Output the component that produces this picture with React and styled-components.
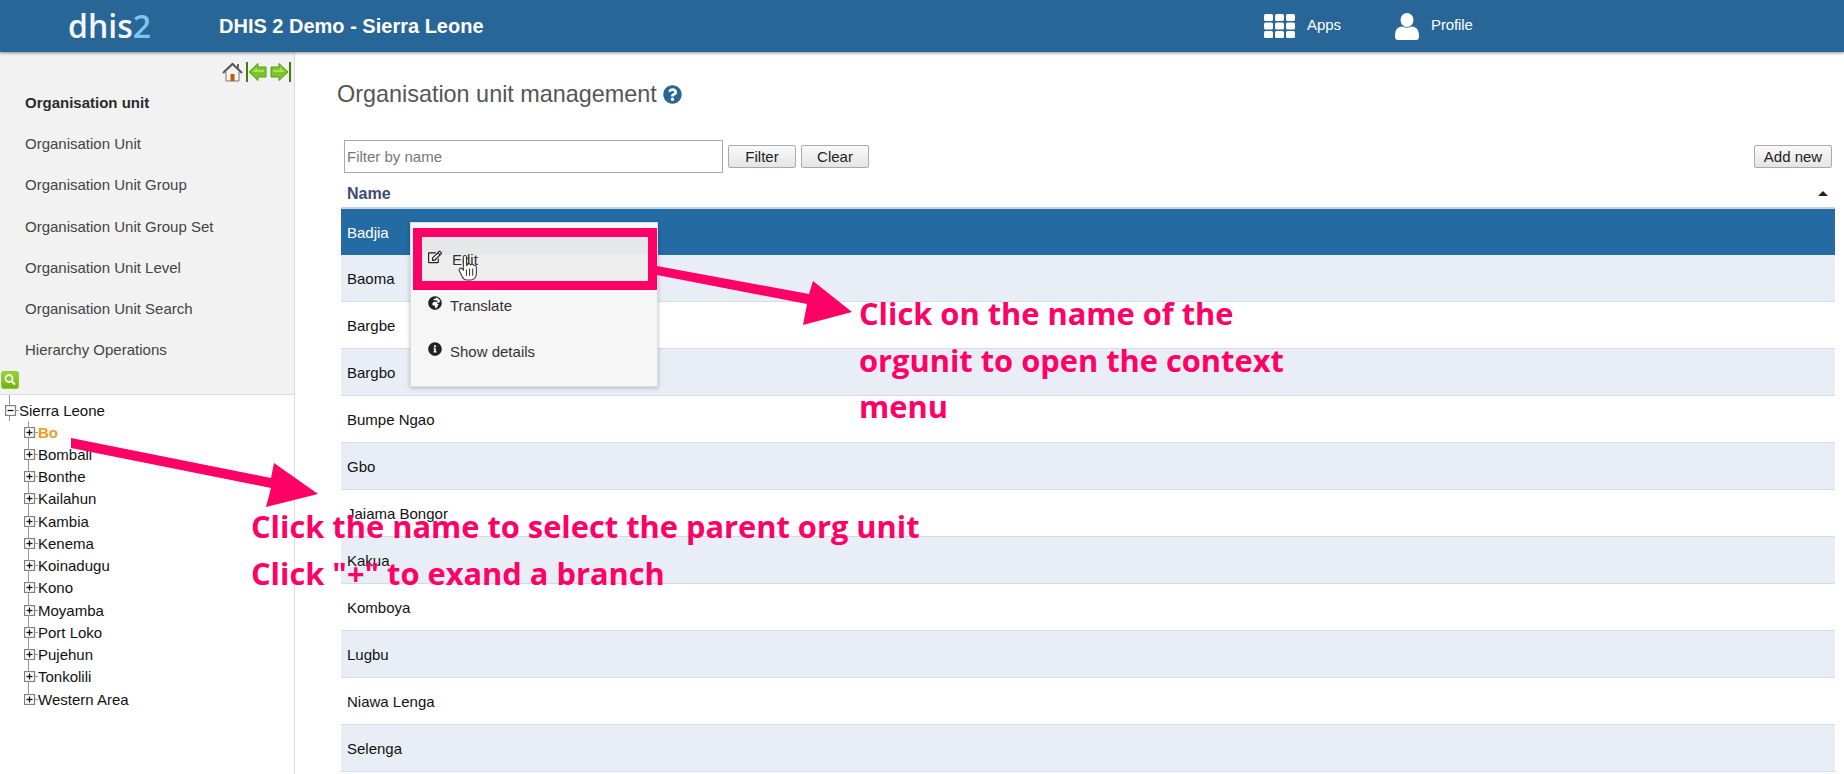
import React from 'react';
import styled, { createGlobalStyle } from 'styled-components';
import { FaQuestionCircle, FaRegEdit, FaGlobeAfrica, FaInfoCircle } from 'react-icons/fa';

const Global = createGlobalStyle`
  html, body {
    margin: 0;
    padding: 0;
    background: #fff;
  }
  body {
    font-family: "Liberation Sans", Arial, sans-serif;
    color: #222;
  }
`;

const Page = styled.div`
  position: relative;
  width: 1844px;
  height: 774px;
  overflow: hidden;
`;

const Header = styled.header`
  position: relative;
  z-index: 2;
  display: flex;
  align-items: center;
  height: 52px;
  background: #276696;
  box-shadow: 0 1px 3px rgba(0, 0, 0, 0.45);
  color: #fff;
`;

const Logo = styled.div`
  width: 219px;
  padding-left: 68px;
  box-sizing: border-box;
  font-family: "Open Sans", sans-serif;
  font-size: 32px;
  font-weight: 600;
  line-height: 52px;
  color: #f2f6f9;

  span {
    color: #7fc4f5;
  }
`;

const Title = styled.div`
  width: 1045px;
  font-size: 20px;
  font-weight: 700;
`;

const NavLink = styled.div`
  display: flex;
  align-items: center;
  gap: ${(p) => p.$gap}px;
  width: ${(p) => p.$width}px;
  font-size: 15px;
  letter-spacing: -0.1px;

  span {
    padding-bottom: 3px;
  }
`;

const Body = styled.div`
  display: flex;
  height: 722px;
`;

const Sidebar = styled.aside`
  flex: none;
  width: 295px;
  box-sizing: border-box;
  border-right: 1px solid #ddd;
`;

const SideTop = styled.div`
  height: 343px;
  box-sizing: border-box;
  background: #f2f2f2;
  border-bottom: 1px solid #ddd;
`;

const ShortcutBar = styled.div`
  display: flex;
  justify-content: flex-end;
  gap: 3px;
  height: 30px;
  padding: 10px 3px 0 0;
  box-sizing: border-box;
`;

const SideItem = styled.div`
  display: flex;
  align-items: center;
  height: 41.2px;
  padding-left: 25px;
  font-size: 15px;
  font-weight: ${(p) => (p.$bold ? 700 : 400)};
  color: ${(p) => (p.$bold ? '#2b2b2b' : '#444')};
`;

const SearchRow = styled.div`
  padding: 1px 0 0 1px;
`;

const Tree = styled.div`
  position: relative;
  padding: 5px 0 0 5px;
`;

const TreeRow = styled.div`
  position: relative;
  display: flex;
  align-items: center;
  height: ${(p) => (p.$child ? 22.25 : 21)}px;
  padding-left: ${(p) => (p.$child ? 19 : 0)}px;
  font-size: 15px;
  color: #111;

  &::before {
    content: '';
    position: absolute;
    left: ${(p) => (p.$child ? 23 : 4)}px;
    top: ${(p) => (p.$child ? 0 : -5)}px;
    bottom: ${(p) => (p.$last ? '50%' : 0)};
    width: 1px;
    background: #999;
    display: ${(p) => (p.$child || p.$root ? 'block' : 'none')};
  }
`;

const TreeBox = styled.svg`
  position: relative;
  flex: none;
  width: 14px;
  height: 11px;
`;

const TreeLabel = styled.span`
  font-weight: ${(p) => (p.$selected ? 700 : 400)};
  color: ${(p) => (p.$selected ? '#f49a1e' : '#111')};
`;

const Main = styled.main`
  flex: 1;
  min-width: 0;
  padding: 0 9px 0 46px;
`;

const PageTitle = styled.h1`
  display: flex;
  align-items: center;
  gap: 6px;
  height: 88px;
  margin: 0 0 0 -4px;
  padding-bottom: 4px;
  box-sizing: border-box;
  font-size: 23.4px;
  font-weight: 400;
  color: #555;

  svg {
    color: #276696;
    font-size: 19px;
  }
`;

const Toolbar = styled.div`
  display: flex;
  align-items: center;
  gap: 5px;
  height: 33px;
  padding: 0 3px;
`;

const FilterInput = styled.input`
  flex: none;
  width: 379px;
  height: 33px;
  padding: 0 2px;
  box-sizing: border-box;
  border: 1px solid #aaa;
  font-family: inherit;
  font-size: 15px;

  &::placeholder {
    color: #777;
    opacity: 1;
  }
`;

const Button = styled.button`
  flex: none;
  width: ${(p) => p.$width}px;
  height: 23px;
  margin-left: ${(p) => (p.$push ? 'auto' : 0)};
  padding: 0;
  border: 1px solid #aaa;
  border-radius: 2px;
  background: linear-gradient(#fafafa, #e4e4e4);
  font-family: inherit;
  font-size: 15px;
  color: #222;
`;

const Table = styled.div`
  font-size: 15px;
`;

const HeadRow = styled.div`
  display: flex;
  align-items: center;
  justify-content: space-between;
  height: 36px;
  padding: 7px 7px 0 6px;
  box-sizing: border-box;
  border-bottom: 2px solid #c5d3e6;
  font-size: 16px;
  font-weight: 700;
  color: #3b4d74;
`;

const SortArrow = styled.i`
  width: 0;
  height: 0;
  border-left: 5px solid transparent;
  border-right: 5px solid transparent;
  border-bottom: 5px solid #222;
`;

const Row = styled.div`
  display: flex;
  align-items: center;
  height: ${(p) => (p.$active ? 46 : 47)}px;
  padding-left: 6px;
  box-sizing: border-box;
  background: ${(p) => (p.$active ? '#246ba3' : p.$odd ? '#e9eef6' : '#fff')};
  border-bottom: ${(p) => (p.$active ? 0 : '1px solid #cfdaea')};
  color: ${(p) => (p.$active ? '#fff' : '#111')};
`;

const ContextMenu = styled.div`
  position: absolute;
  left: 410px;
  top: 222px;
  width: 248px;
  height: 165px;
  padding-top: 13px;
  box-sizing: border-box;
  background: #f6f6f6;
  border: 1px solid #ddd;
  box-shadow: 0 1px 4px rgba(0, 0, 0, 0.25);
  font-size: 15px;
  color: #333;
`;

const MenuItem = styled.div`
  display: flex;
  align-items: center;
  gap: ${(p) => p.$gap}px;
  height: 46px;
  padding-left: 17px;

  svg {
    flex: none;
    color: #222;
    font-size: 14px;
    transform: translateY(-2px);
  }
`;

const HoverBox = styled.div`
  position: absolute;
  left: 2px;
  top: 5px;
  width: 244px;
  height: 62px;
  box-sizing: border-box;
  border: 9px solid #ff0066;
  background: linear-gradient(#e6e7e8 0, #e6e7e8 40%, #eeeeee 40%);
`;

const EditLayer = styled.div`
  position: relative;
  z-index: 1;
`;

const HandCursor = styled.svg`
  position: absolute;
  left: 47px;
  top: 19px;
  width: 19px;
  height: 26px;
`;

const ArrowLayer = styled.svg`
  position: absolute;
  left: 0;
  top: 0;
  z-index: 3;
  pointer-events: none;
`;

const Note = styled.div`
  position: absolute;
  z-index: 4;
  left: ${(p) => p.$left}px;
  top: ${(p) => p.$top}px;
  width: ${(p) => p.$width}px;
  font-family: "Open Sans", sans-serif;
  font-size: 30.8px;
  font-weight: 700;
  line-height: 46.5px;
  color: #ff0066;
`;

function HomeIcon() {
  return (
    <svg width="21" height="21" viewBox="0 0 21 21">
      <path d="M4 10v9h13v-9" fill="#f4f4f0" stroke="#777" />
      <path d="M1 11 10.500 2 20 11" fill="none" stroke="#555" strokeWidth="2" />
      <path d="M15 2h2v5h-2z" fill="#666" />
      <rect x="8.500" y="12" width="4" height="7" fill="#c6560f" />
    </svg>
  );
}

function GreenArrow({ flip }) {
  return (
    <svg width="21" height="21" viewBox="0 0 21 21" style={flip ? { transform: 'scaleX(-1)' } : undefined}>
      <rect x="0" y="0" width="2" height="20" fill="#3f7f06" />
      <path d="M3 10 12 1.500v3.500h8v10h-8v3.500z" fill="#7cc52c" stroke="#5b9a16" />
      <path d="M6 10 11 5.500v2.500h7v2z" fill="#a8e060" />
    </svg>
  );
}

function SearchButton() {
  return (
    <svg width="18" height="18" viewBox="0 0 18 18">
      <defs>
        <linearGradient id="searchFill" x1="0" y1="0" x2="0" y2="1">
          <stop offset="0" stopColor="#9ad43a" />
          <stop offset="1" stopColor="#6db30e" />
        </linearGradient>
      </defs>
      <rect x="0.500" y="0.500" width="17" height="17" rx="2" fill="url(#searchFill)" stroke="#8ccf2a" />
      <circle cx="8" cy="7.500" r="3.500" fill="none" stroke="#fff" strokeWidth="1.800" />
      <path d="M10.500 10 14 13.500" stroke="#fff" strokeWidth="2" />
    </svg>
  );
}

function BoxIcon({ open }) {
  return (
    <TreeBox viewBox="0 0 14 11">
      <rect x="0.500" y="0.500" width="10" height="10" fill="#fff" stroke="#808080" strokeWidth="1.300" />
      <path d="M11 5.500h3" stroke="#999" />
      <path d="M2.500 5.500h6" stroke="#111" strokeWidth="1.300" />
      {!open && <path d="M5.500 2.500v6" stroke="#111" strokeWidth="1.300" />}
    </TreeBox>
  );
}

const sideItems = [
  'Organisation Unit',
  'Organisation Unit Group',
  'Organisation Unit Group Set',
  'Organisation Unit Level',
  'Organisation Unit Search',
  'Hierarchy Operations',
];

const districts = [
  'Bo', 'Bombali', 'Bonthe', 'Kailahun', 'Kambia', 'Kenema', 'Koinadugu',
  'Kono', 'Moyamba', 'Port Loko', 'Pujehun', 'Tonkolili', 'Western Area',
];

const chiefdoms = [
  'Badjia', 'Baoma', 'Bargbe', 'Bargbo', 'Bumpe Ngao', 'Gbo', 'Jaiama Bongor',
  'Kakua', 'Komboya', 'Lugbu', 'Niawa Lenga', 'Selenga',
];

export default function App() {
  return (
    <Page>
      <Global />
      <Header>
        <Logo>dhis<span>2</span></Logo>
        <Title>DHIS 2 Demo - Sierra Leone</Title>
        <NavLink $width={131} $gap={12}>
          <svg width="31" height="24" viewBox="0 0 31 24" fill="#fff">
            {[0, 1, 2].map((r) =>
              [0, 1, 2].map((c) => (
                <rect key={`${r}${c}`} x={c * 11} y={r * 8.500} width="9" height="7" rx="1.500" />
              ))
            )}
          </svg>
          <span>Apps</span>
        </NavLink>
        <NavLink $gap={12}>
          <svg width="24" height="27" viewBox="0 0 24 27" fill="#fff">
            <ellipse cx="12" cy="7" rx="6.500" ry="7" />
            <path d="M0 23c0-7 3-9 7-9.500 3 1.500 7 1.500 10 0 4 .5 7 2.500 7 9.500 0 3-1 4-3 4H3c-2 0-3-1-3-4z" />
          </svg>
          <span>Profile</span>
        </NavLink>
      </Header>
      <Body>
        <Sidebar>
          <SideTop>
            <ShortcutBar>
              <HomeIcon />
              <GreenArrow />
              <GreenArrow flip />
            </ShortcutBar>
            <SideItem $bold>Organisation unit</SideItem>
            {sideItems.map((item) => (
              <SideItem key={item}>{item}</SideItem>
            ))}
            <SearchRow>
              <SearchButton />
            </SearchRow>
          </SideTop>
          <Tree>
            <TreeRow $root>
              <BoxIcon open />
              Sierra Leone
            </TreeRow>
            {districts.map((name, i) => (
              <TreeRow key={name} $child $last={i === districts.length - 1}>
                <BoxIcon />
                <TreeLabel $selected={i === 0}>{name}</TreeLabel>
              </TreeRow>
            ))}
          </Tree>
        </Sidebar>
        <Main>
          <PageTitle>
            Organisation unit management <FaQuestionCircle />
          </PageTitle>
          <Toolbar>
            <FilterInput placeholder="Filter by name" />
            <Button $width={68}>Filter</Button>
            <Button $width={68}>Clear</Button>
            <Button $width={78} $push>Add new</Button>
          </Toolbar>
          <Table>
            <HeadRow>
              Name
              <SortArrow />
            </HeadRow>
            {chiefdoms.map((name, i) => (
              <Row key={name} $active={i === 0} $odd={i % 2 === 1}>{name}</Row>
            ))}
          </Table>
        </Main>
      </Body>

      <ContextMenu>
        <HoverBox />
        <EditLayer>
          <MenuItem $gap={10}>
            <FaRegEdit />
            Edit
          </MenuItem>
          <HandCursor viewBox="0 0 18 25">
            <path
              d="M5 2c0-2 3-2 3 0v8l1-.5c.5-1.500 2.500-1.500 3 0 .5-1 2.500-1 3 .5 1-.5 2.500 0 2.500 1.500V18c0 3-2 6-5 6H8c-2 0-3-1-4-3L1 15c-.5-1.500 1-3 2.500-2l1.500 1.500z"
              fill="#fff"
              stroke="#333"
              strokeWidth="1"
            />
            <path d="M8 14v6M11 13v7M14 13v7" stroke="#333" strokeWidth="1" />
          </HandCursor>
        </EditLayer>
        <MenuItem $gap={8}>
          <FaGlobeAfrica />
          Translate
        </MenuItem>
        <MenuItem $gap={8}>
          <FaInfoCircle />
          Show details
        </MenuItem>
      </ContextMenu>

      <ArrowLayer width="1844" height="774" viewBox="0 0 1844 774">
        <path d="M71 438 71 448 271 488 266 507 318 494 274 463 271 478z" fill="#ff0066" />
        <path d="M657 266 657 275 807 304 803 325 852 312 813 281 809 294z" fill="#ff0066" />
      </ArrowLayer>

      <Note $left={859} $top={290} $width={460}>
        Click on the name of the orgunit to open the context menu
      </Note>
      <Note $left={251} $top={503} $width={760}>
        Click the name to select the parent org unit
        <br />
        Click "+" to exand a branch
      </Note>
    </Page>
  );
}
